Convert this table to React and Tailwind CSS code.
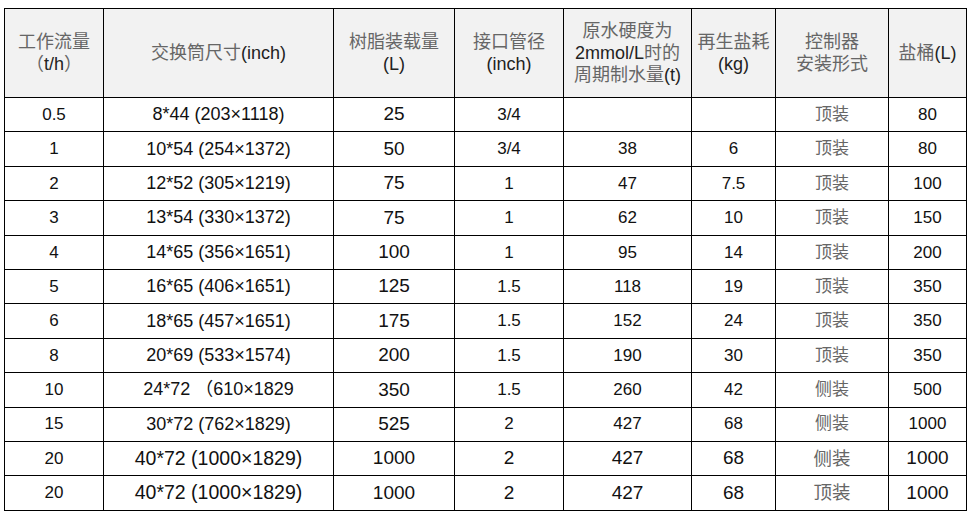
const rows = [
  ["0.5", "8*44 (203×1118)", "25", "3/4", "", "", "顶装", "80"],
  ["1", "10*54 (254×1372)", "50", "3/4", "38", "6", "顶装", "80"],
  ["2", "12*52 (305×1219)", "75", "1", "47", "7.5", "顶装", "100"],
  ["3", "13*54 (330×1372)", "75", "1", "62", "10", "顶装", "150"],
  ["4", "14*65 (356×1651)", "100", "1", "95", "14", "顶装", "200"],
  ["5", "16*65 (406×1651)", "125", "1.5", "118", "19", "顶装", "350"],
  ["6", "18*65 (457×1651)", "175", "1.5", "152", "24", "顶装", "350"],
  ["8", "20*69 (533×1574)", "200", "1.5", "190", "30", "顶装", "350"],
  ["10", "24*72 （610×1829", "350", "1.5", "260", "42", "侧装", "500"],
  ["15", "30*72 (762×1829)", "525", "2", "427", "68", "侧装", "1000"],
  ["20", "40*72 (1000×1829)", "1000", "2", "427", "68", "侧装", "1000", true],
  ["20", "40*72 (1000×1829)", "1000", "2", "427", "68", "顶装", "1000", true],
];

function Zh({ children }) {
  return <span className="text-[#666]">{children}</span>;
}

function Th({ children }) {
  return (
    <th className="border border-black bg-[#f2f2f2] font-normal text-[18px] leading-[22px] text-[#222] align-middle text-center">
      {children}
    </th>
  );
}

export default function App() {
  return (
    <div className="bg-white w-[979px] h-[522px] pt-[8px] pl-[4px] font-['Liberation_Sans','Noto_Sans_CJK_SC',sans-serif]">
      <table className="border-collapse table-fixed w-[962px]">
        <colgroup>
          <col className="w-[99px]" />
          <col className="w-[230px]" />
          <col className="w-[121px]" />
          <col className="w-[109px]" />
          <col className="w-[128px]" />
          <col className="w-[84px]" />
          <col className="w-[113px]" />
          <col className="w-[78px]" />
        </colgroup>
        <thead>
          <tr className="h-[89px]">
            <Th>
              <Zh>工作流量</Zh>
              <br />
              <Zh>（</Zh>t/h<Zh>）</Zh>
            </Th>
            <Th>
              <Zh>交换筒尺寸</Zh>(inch)
            </Th>
            <Th>
              <Zh>树脂装载量</Zh>
              <br />
              (L)
            </Th>
            <Th>
              <Zh>接口管径</Zh>
              <br />
              (inch)
            </Th>
            <Th>
              <Zh>原水硬度为</Zh>
              <br />
              2mmol/L<Zh>时的</Zh>
              <br />
              <Zh>周期制水量</Zh>(t)
            </Th>
            <Th>
              <Zh>再生盐耗</Zh>
              <br />
              (kg)
            </Th>
            <Th>
              <Zh>控制器</Zh>
              <br />
              <Zh>安装形式</Zh>
            </Th>
            <Th>
              <Zh>盐桶</Zh>(L)
            </Th>
          </tr>
        </thead>
        <tbody>
          {rows.map((r, i) => {
            const big = r[8];
            return (
              <tr key={i} className="h-[34.4px]">
                <td className="border border-black text-center align-middle text-[17px] text-[#111]">{r[0]}</td>
                <td className={`border border-black text-center align-middle text-[#111] ${big ? "text-[19.5px]" : "text-[18px]"}`}>{r[1]}</td>
                <td className="border border-black text-center align-middle text-[19px] text-[#111]">{r[2]}</td>
                <td className={`border border-black text-center align-middle text-[#111] ${big ? "text-[19px]" : "text-[17px]"}`}>{r[3]}</td>
                <td className={`border border-black text-center align-middle text-[#111] ${big ? "text-[19px]" : "text-[17px]"}`}>{r[4]}</td>
                <td className={`border border-black text-center align-middle text-[#111] ${big ? "text-[19px]" : "text-[17px]"}`}>{r[5]}</td>
                <td className={`border border-black text-center align-middle text-[#666] ${big ? "text-[18.5px]" : "text-[17px]"}`}>{r[6]}</td>
                <td className={`border border-black text-center align-middle text-[#111] ${big ? "text-[19px]" : "text-[17px]"}`}>{r[7]}</td>
              </tr>
            );
          })}
        </tbody>
      </table>
    </div>
  );
}
